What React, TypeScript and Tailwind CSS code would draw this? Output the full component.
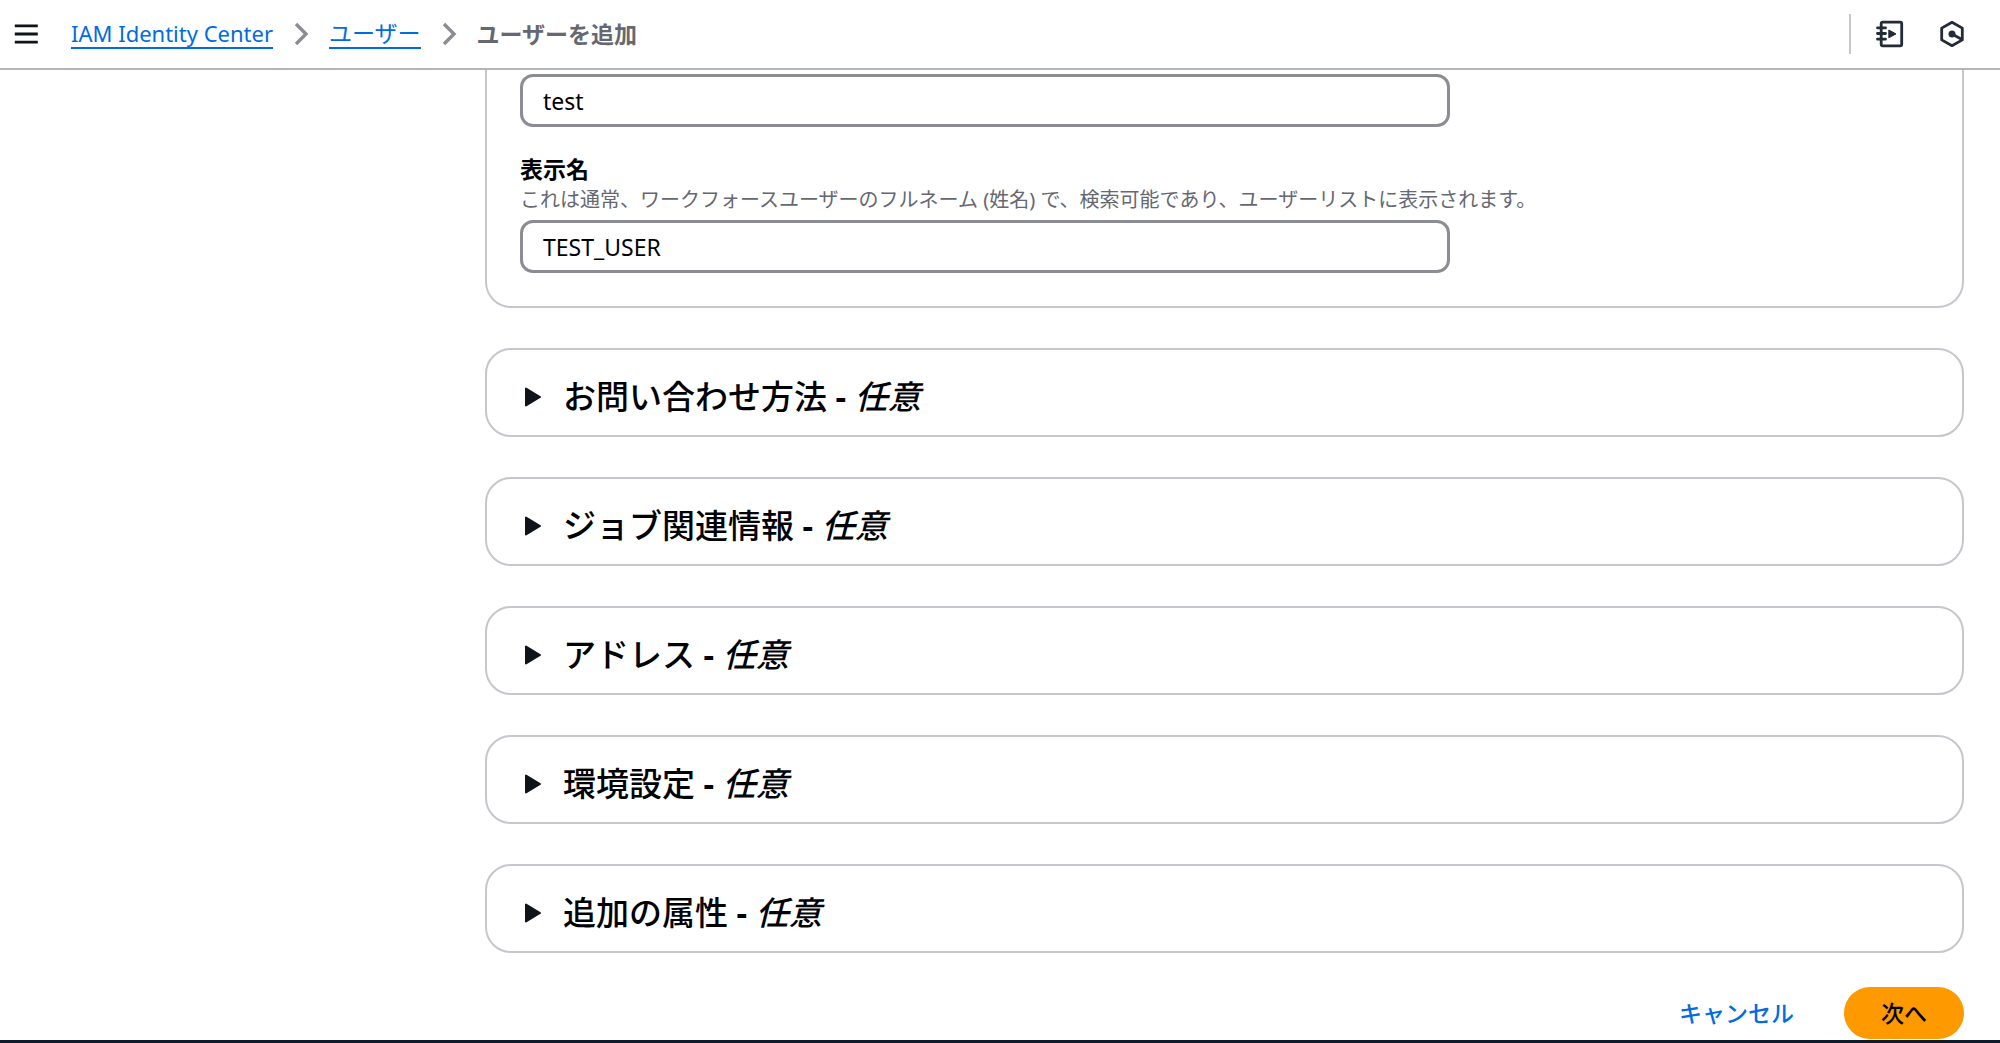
import { useState } from 'react';

const sections = [
  'お問い合わせ方法',
  'ジョブ関連情報',
  'アドレス',
  '環境設定',
  '追加の属性',
];

const MenuIcon = () => (
  <svg className="h-6 w-6" viewBox="0 0 24 24" fill="none" stroke="#0f141a" strokeWidth="2.8" aria-hidden="true">
    <path d="M0.8 3.8h23M0.8 12h23M0.8 20.2h23" />
  </svg>
);

const Chevron = () => (
  <svg className="h-6 w-4" viewBox="0 0 16 24" fill="none" stroke="#8c8c94" strokeWidth="3.4" aria-hidden="true">
    <path d="M3 2l10 10-10 10" />
  </svg>
);

const TutorialIcon = () => (
  <svg className="h-8 w-8" viewBox="0 0 32 32" fill="none" stroke="#232b37" strokeWidth="2.8" strokeLinejoin="round" aria-hidden="true">
    <rect x="7.2" y="4.2" width="20.5" height="23.6" rx="1.5" />
    <path d="M3.5 9.8h8M3.5 15.5h8M3.5 21.2h8" strokeWidth="2.8" strokeLinecap="round" />
    <path d="M14.8 12v7.8l7.2-3.9z" fill="#232b37" strokeWidth="1" />
  </svg>
);

const HexagonIcon = () => (
  <svg className="h-8 w-8" viewBox="0 0 32 32" fill="none" stroke="#232b37" strokeWidth="2.8" strokeLinejoin="round" aria-hidden="true">
    <path d="M16 4.3l10.3 5.8v11.8L16 27.7 5.7 21.9V10.1z" />
    <path d="M16 16l9.5 5.2" />
    <circle cx="16" cy="16" r="3.5" fill="#232b37" stroke="none" />
  </svg>
);

function Section({ title }: { title: string }) {
  const [open, setOpen] = useState(false);

  return (
    <section className="rounded-[26px] border-2 border-[#c6c6cd] px-8 pt-6 pb-4">
      <h2 className="text-[33px] leading-[45px] font-medium">
        <button
          type="button"
          aria-expanded={open}
          onClick={() => setOpen(!open)}
          className="flex w-full cursor-pointer items-center gap-5 pl-1 text-left"
        >
          <svg
            className={open ? 'h-5 w-5 rotate-90' : 'h-5 w-5'}
            viewBox="0 0 20 20"
            fill="#0f141a"
            stroke="#0f141a"
            strokeWidth="2"
            strokeLinejoin="round"
            aria-hidden="true"
          >
            <path d="M3 1.5v17L17 10z" />
          </svg>
          <span>
            {title} <b>-</b> <i>任意</i>
          </span>
        </button>
      </h2>
    </section>
  );
}

export default function App() {
  const [userName, setUserName] = useState('test');
  const [displayName, setDisplayName] = useState('TEST_USER');

  return (
    <div className="flex min-h-screen flex-col bg-white font-['Noto_Sans','Noto_Sans_CJK_JP',sans-serif] text-[23px] leading-8 text-[#000206]" lang="ja">
      <header className="flex h-[70px] items-center justify-between border-b-2 border-[#b4b4bb] pr-8 pl-[14px]">
        <div className="flex items-center gap-[33px]">
          <button type="button" aria-label="メニュー" className="cursor-pointer">
            <MenuIcon />
          </button>
          <nav aria-label="breadcrumb">
            <ol className="flex items-center gap-5">
              <li>
                <a href="#home" className="block border-b-2 border-[#006ce0] text-[22px] leading-7 text-[#006ce0]">IAM Identity Center</a>
              </li>
              <li><Chevron /></li>
              <li>
                <a href="#users" className="block border-b-2 border-[#006ce0] leading-7 text-[#006ce0]">ユーザー</a>
              </li>
              <li><Chevron /></li>
              <li className="font-bold text-[#656871]" aria-current="page">ユーザーを追加</li>
            </ol>
          </nav>
        </div>
        <div className="flex h-10 items-center gap-[30px] border-l-2 border-[#c6c6cd] pl-[23px]">
          <button type="button" aria-label="チュートリアル" className="cursor-pointer">
            <TutorialIcon />
          </button>
          <button type="button" aria-label="診断" className="cursor-pointer">
            <HexagonIcon />
          </button>
        </div>
      </header>

      <main className="ml-[485px] flex grow flex-col gap-10 pr-9">
        <section className="flex flex-col gap-[27px] rounded-b-[26px] border-2 border-t-0 border-[#c6c6cd] px-[33px] pt-1 pb-[33px]">
          <input
            type="text"
            aria-label="ユーザー名"
            value={userName}
            onChange={(e) => setUserName(e.target.value)}
            className="h-[53px] w-[66%] rounded-[13px] border-3 border-[#8c8c94] px-5"
          />
          <div>
            <label htmlFor="display-name" className="block leading-[30px] font-bold">表示名</label>
            <p id="display-name-hint" className="pb-[5px] text-[20px] leading-[31px] text-[#656871]">
              これは通常、ワークフォースユーザーのフルネーム (姓名) で、検索可能であり、ユーザーリストに表示されます。
            </p>
            <input
              id="display-name"
              type="text"
              aria-describedby="display-name-hint"
              value={displayName}
              onChange={(e) => setDisplayName(e.target.value)}
              className="block h-[53px] w-[66%] rounded-[13px] border-3 border-[#8c8c94] px-5"
            />
          </div>
        </section>

        {sections.map((title) => (
          <Section key={title} title={title} />
        ))}
      </main>

      <div className="flex items-center justify-end gap-[13px] pt-[34px] pr-9 pb-px font-medium">
        <button type="button" className="h-[52px] cursor-pointer rounded-full px-[37px] text-[#006ce0]">キャンセル</button>
        <button type="button" className="h-[52px] cursor-pointer rounded-full bg-[#ff9900] px-[37px]">次へ</button>
      </div>
      <footer className="h-[3px] bg-[#0f1b2a]" />
    </div>
  );
}
